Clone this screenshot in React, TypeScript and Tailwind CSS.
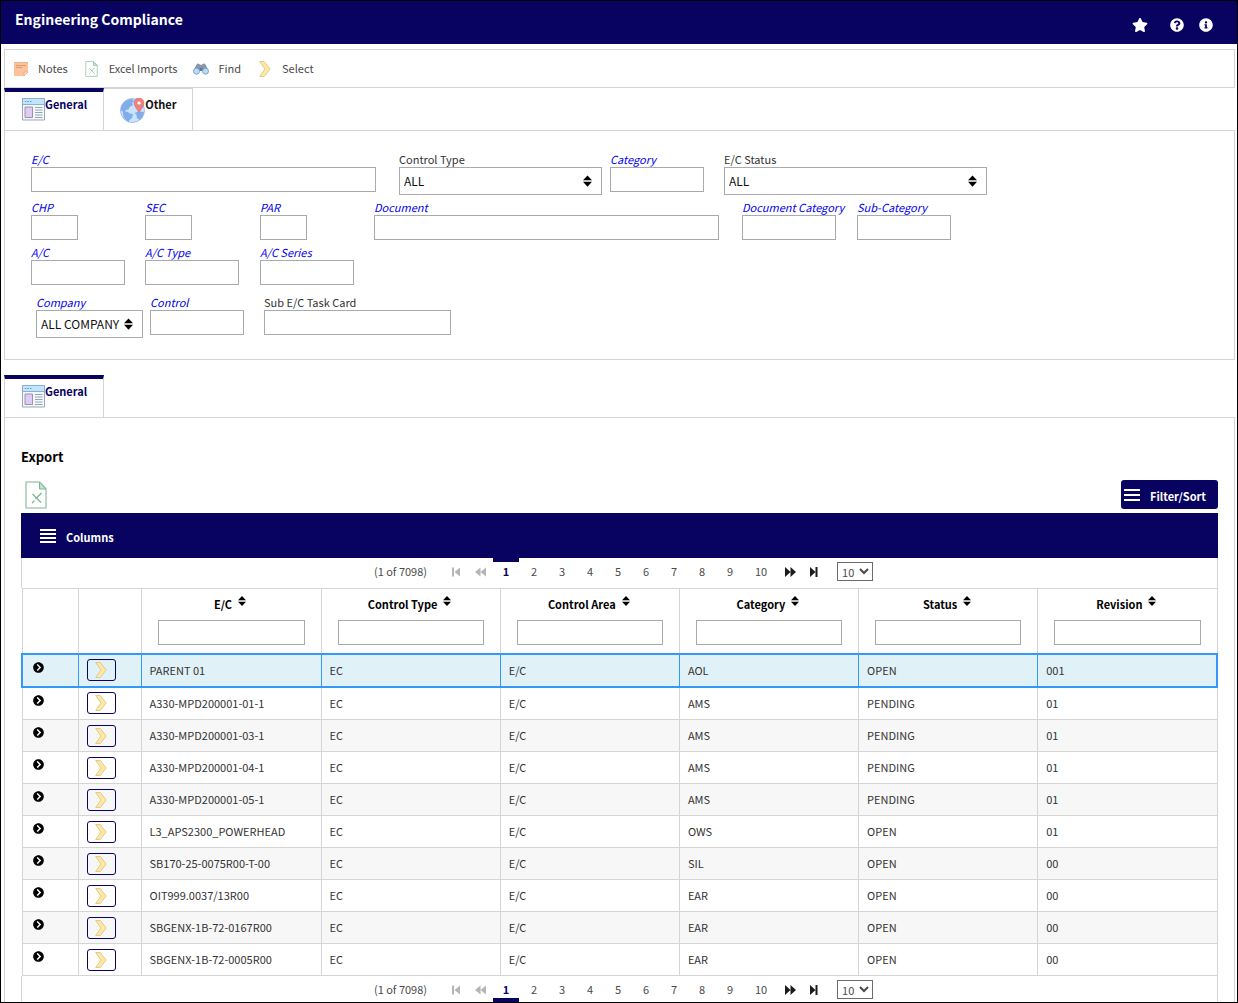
import { useId, useState } from 'react';
import { FaChevronCircleRight, FaInfoCircle, FaQuestionCircle, FaStar } from 'react-icons/fa';

interface EcRow {
  ec: string;
  controlType: string;
  controlArea: string;
  category: string;
  status: string;
  revision: string;
}

const rows: EcRow[] = [
  { ec: 'PARENT 01', controlType: 'EC', controlArea: 'E/C', category: 'AOL', status: 'OPEN', revision: '001' },
  { ec: 'A330-MPD200001-01-1', controlType: 'EC', controlArea: 'E/C', category: 'AMS', status: 'PENDING', revision: '01' },
  { ec: 'A330-MPD200001-03-1', controlType: 'EC', controlArea: 'E/C', category: 'AMS', status: 'PENDING', revision: '01' },
  { ec: 'A330-MPD200001-04-1', controlType: 'EC', controlArea: 'E/C', category: 'AMS', status: 'PENDING', revision: '01' },
  { ec: 'A330-MPD200001-05-1', controlType: 'EC', controlArea: 'E/C', category: 'AMS', status: 'PENDING', revision: '01' },
  { ec: 'L3_APS2300_POWERHEAD', controlType: 'EC', controlArea: 'E/C', category: 'OWS', status: 'OPEN', revision: '01' },
  { ec: 'SB170-25-0075R00-T-00', controlType: 'EC', controlArea: 'E/C', category: 'SIL', status: 'OPEN', revision: '00' },
  { ec: 'OIT999.0037/13R00', controlType: 'EC', controlArea: 'E/C', category: 'EAR', status: 'OPEN', revision: '00' },
  { ec: 'SBGENX-1B-72-0167R00', controlType: 'EC', controlArea: 'E/C', category: 'EAR', status: 'OPEN', revision: '00' },
  { ec: 'SBGENX-1B-72-0005R00', controlType: 'EC', controlArea: 'E/C', category: 'EAR', status: 'OPEN', revision: '00' },
];

const columns = ['E/C', 'Control Type', 'Control Area', 'Category', 'Status', 'Revision'];

const NoteIcon = () => (
  <svg width="14" height="14" viewBox="0 0 14 14">
    <path d="M0 0h14v10l-4 4H0z" fill="#fcc29a" />
    <path d="M0 .5h14" stroke="#eab48c" />
    <path d="M2 3.500h10M2 5.500h6" stroke="#dc9a6c" />
    <path d="M10 14v-4h4z" fill="#fde3d0" stroke="#e0a070" strokeWidth=".6" />
  </svg>
);

const ExcelIcon = ({ className }: { className: string }) => (
  <svg className={className} viewBox="0 0 22 28">
    <path d="M1 1h13.500l6.500 7v19H1z" fill="#fff" stroke="#a9cdb8" strokeWidth="1.600" strokeLinejoin="round" />
    <path d="M14.500 1v7h6.500z" fill="#bfe6c9" stroke="#7fb394" strokeWidth="1" strokeLinejoin="round" />
    <path d="M7.500 13l8.500 8.500M16.500 12l-6 6M9.500 19.500l-2.500 2.500" stroke="#7fb394" strokeWidth="1.300" fill="none" />
  </svg>
);

const BinocularsIcon = () => (
  <svg width="16" height="12" viewBox="0 0 16 12">
    <path d="M3.500 1.500Q4.800-.2 6.300.9l.7.800h2l.7-.800q1.500-1.100 2.800.6l2.800 5.700H.7z" fill="#8796ac" />
    <path d="M6.500 5h3v3h-3z" fill="#66758e" />
    <circle cx="3.500" cy="8.200" r="3" fill="#b5dcfa" stroke="#7c9cc4" strokeWidth=".9" />
    <circle cx="12.500" cy="8.200" r="3" fill="#b5dcfa" stroke="#7c9cc4" strokeWidth=".9" />
  </svg>
);

const ArrowIcon = () => (
  <svg width="12" height="16" viewBox="0 0 12 16">
    <path d="M.7.500h4.500l6 7.500-6 7.500H.7L6 8z" fill="#ffe9a0" stroke="#dcc588" strokeWidth=".9" strokeLinejoin="round" />
  </svg>
);

const WindowIcon = () => (
  <svg width="23" height="23" viewBox="0 0 23 23">
    <path d="M.5.500h22v21.500H.5z" fill="#f6f9fc" stroke="#93a9bd" />
    <path d="M1 1h21v5H1z" fill="#c0e5ff" />
    <path d="M.5 6.500h22M.5.500h22" stroke="#8ab0d8" />
    <path d="M3 3.500h1.500M5.500 3.500h1.500M8 3.500h1.500" stroke="#7394bd" />
    <path d="M3 9h7.500v10.500H3z" fill="#dccdf2" stroke="#a78cae" />
    <path d="M13 9.500h7.500M13 12h7.500M13 14.500h7.500M13 17h7.500M13 19.500h7.500" stroke="#94a6b4" />
  </svg>
);

const GlobeIcon = () => (
  <svg width="25" height="25" viewBox="0 0 25 25">
    <circle cx="12.500" cy="12.500" r="12" fill="#c6e4fd" stroke="#8cb2e6" strokeWidth=".8" />
    <path d="M3 5.500Q6.500 1 12 1l2 2-2 2.500 1 2-3 1-1.500 3-3 .5-.5 3-3-2-1.500-1Q1 8 3 5.500z" fill="#83ade9" />
    <path d="M3 14l4-.5 3 2 3 .5-1 4-3 2.500v2L5.500 21.500Q2.500 18.500 3 14z" fill="#83ade9" />
    <path d="M14.500 15l4-1.500 5.500.5q-.5 5-4.500 8L17 20l-.5-3zM17 6l4-1 2.500 4-4 2z" fill="#83ade9" />
    <path d="M19 0a4.900 4.900 0 0 1 4.900 5c0 3-2.900 6-4.900 9.500-2-3.500-4.900-6.500-4.900-9.500A4.900 4.900 0 0 1 19 0z" fill="#f28080" stroke="#d66565" strokeWidth=".6" />
    <circle cx="19" cy="5" r="2.100" fill="#fff" stroke="#d66565" strokeWidth=".6" />
  </svg>
);

const SortIcon = ({ className }: { className: string }) => (
  <svg className={className} viewBox="0 0 8 10" fill="#000">
    <path d="M4 0l4 4.300H0zM4 10L0 5.700h8z" />
  </svg>
);

const BarsIcon = ({ lines }: { lines: number[] }) => (
  <svg width="16" height="14" viewBox="0 0 16 14">
    {lines.map((y) => (
      <path key={y} d={`M0 ${y}h16`} stroke="#fff" strokeWidth="2" />
    ))}
  </svg>
);

const pagerPaths = {
  First: 'M1 0.500h2v9H1zM9 0.500v9L3.500 5z',
  Previous: 'M5.500 0.500v9L0 5zM11 0.500v9L5.500 5z',
  Next: 'M0 0v10L5.500 5zM5.500 0v10L11 5z',
  Last: 'M1 0v10L6.500 5zM6.500 0h2v10h-2z',
};

const PagerButton = ({ name, disabled }: { name: keyof typeof pagerPaths; disabled?: boolean }) => (
  <button
    type="button"
    aria-label={name}
    disabled={disabled}
    className="flex w-[22px] items-center justify-center pt-0.5 text-[#1c1c1c] disabled:text-[#b5b5b5]"
  >
    <svg width="11" height="10" viewBox="0 0 11 10" fill="currentColor">
      <path d={pagerPaths[name]} />
    </svg>
  </button>
);

interface PaginatorProps {
  page: number;
  onChange: (page: number) => void;
  position: 'top' | 'bottom';
}

const Paginator = ({ page, onChange, position }: PaginatorProps) => {
  const marker = position === 'top' ? 'border-t-4 pb-1' : 'border-b-4 pt-1';
  return (
    <div
      className={`flex justify-center gap-0.5 border-x border-[#d5d5d5] pl-2 text-[11px] text-[#4a4a4a] ${
        position === 'top' ? 'h-[30px] pb-1' : 'h-[26px]'
      }`}
    >
      <span className="mr-4 flex items-center">(1 of 7098)</span>
      <PagerButton name="First" disabled />
      <PagerButton name="Previous" disabled />
      {[1, 2, 3, 4, 5, 6, 7, 8, 9, 10].map((n) => (
        <button
          key={n}
          type="button"
          onClick={() => onChange(n)}
          className={`${n === 10 ? 'w-8' : 'w-[26px]'} ${
            n === page ? `${marker} border-[#080361] font-bold text-[#080361]` : ''
          }`}
        >
          {n}
        </button>
      ))}
      <PagerButton name="Next" />
      <PagerButton name="Last" />
      <select
        aria-label="Rows per page"
        defaultValue="10"
        className="ml-2.5 h-[19px] w-9 self-center border border-[#6b6b6b] bg-white pb-0.5 text-[11px]"
      >
        <option>10</option>
        <option>25</option>
        <option>50</option>
      </select>
    </div>
  );
};

interface FieldProps {
  label: string;
  width: string;
  plain?: boolean;
  options?: string[];
}

const Field = ({ label, width, plain, options }: FieldProps) => {
  const id = useId();
  return (
    <div className={width}>
      <label
        htmlFor={id}
        className={`block text-[11px] leading-4 whitespace-nowrap ${plain ? 'text-[#333]' : 'text-[#0000f0] italic'}`}
      >
        {label}
      </label>
      {options ? (
        <div className="relative">
          <select
            id={id}
            className="block h-7 w-full appearance-none border border-[#a9a9b0] bg-white pl-1 text-[12px] text-[#111]"
          >
            {options.map((o) => (
              <option key={o}>{o}</option>
            ))}
          </select>
          <SortIcon className="pointer-events-none absolute top-2 right-2.5 h-3 w-[9px]" />
        </div>
      ) : (
        <input id={id} type="text" className="block h-[25px] w-full border border-[#a9a9b0] bg-white px-1 text-[12px]" />
      )}
    </div>
  );
};

interface TabProps {
  label: string;
  icon: React.ReactNode;
  active?: boolean;
}

const Tab = ({ label, icon, active }: TabProps) => (
  <button
    type="button"
    role="tab"
    aria-selected={!!active}
    className={`flex h-[42px] items-start border-r border-[#d5d5d5] pr-4 text-[11px] leading-4 font-bold ${
      active ? 'border-l border-t-4 border-t-[#080361] pt-1 pl-[17px] text-[#080361]' : 'border-t pt-[7px] pl-4 text-[#111]'
    }`}
  >
    <span className="pt-0.5">{icon}</span>
    {label}
  </button>
);

const tools = [
  { label: 'Notes', icon: <NoteIcon /> },
  { label: 'Excel Imports', icon: <ExcelIcon className="h-4 w-[13px]" /> },
  { label: 'Find', icon: <BinocularsIcon /> },
  { label: 'Select', icon: <ArrowIcon /> },
];

const App = () => {
  const [page, setPage] = useState(1);
  const [selected, setSelected] = useState(0);

  return (
    <div className="border border-black bg-white font-['Noto_Sans_CJK_SC','Source_Sans_Pro',sans-serif] text-[#333]">
      <header className="flex h-[43px] justify-between bg-[#080361] pr-6 pl-3.5 text-white">
        <h1 className="pt-2 text-[14px] leading-5 font-bold">Engineering Compliance</h1>
        <div className="flex items-center pt-1">
          <button type="button" aria-label="Favourite" className="mr-[22px]">
            <FaStar size={16} />
          </button>
          <button type="button" aria-label="Help" className="mr-[15px]">
            <FaQuestionCircle size={14} />
          </button>
          <button type="button" aria-label="Information">
            <FaInfoCircle size={14} />
          </button>
        </div>
      </header>

      <main className="pt-[5px] pr-0.5 pl-[3px]">
        <div className="flex h-[39px] items-center gap-4 border border-[#d5d5d5] pl-2 text-[11px] leading-4 text-[#4a4a4a]">
          {tools.map((t) => (
            <button key={t.label} type="button" className="flex items-center gap-[9px]">
              <span className="flex w-4 justify-center">{t.icon}</span>
              <span className="pb-0.5">{t.label}</span>
            </button>
          ))}
        </div>

        <div role="tablist" className="flex">
          <Tab label="General" icon={<WindowIcon />} active />
          <Tab label="Other" icon={<GlobeIcon />} />
        </div>

        <section className="border border-[#d5d5d5] px-[26px] pt-5 pb-[21px]">
          <div className="flex h-12">
            <Field label="E/C" width="mr-[23px] w-[345px]" />
            <Field label="Control Type" width="mr-2 w-[203px]" plain options={['ALL']} />
            <Field label="Category" width="mr-5 w-[94px]" />
            <Field label="E/C Status" width="w-[263px]" plain options={['ALL']} />
          </div>
          <div className="grid grid-cols-[114px_115px_114px_368px_115px_94px] gap-y-1">
            <Field label="CHP" width="w-[47px]" />
            <Field label="SEC" width="w-[47px]" />
            <Field label="PAR" width="w-[47px]" />
            <Field label="Document" width="w-[345px]" />
            <Field label="Document Category" width="w-[94px]" />
            <Field label="Sub-Category" width="w-[94px]" />
            <Field label="A/C" width="w-[94px]" />
            <Field label="A/C Type" width="w-[94px]" />
            <Field label="A/C Series" width="w-[94px]" />
          </div>
          <div className="mt-[9px] grid grid-cols-[114px_114px_187px] pl-[5px]">
            <Field label="Company" width="w-[107px]" options={['ALL COMPANY']} />
            <Field label="Control" width="w-[94px]" />
            <Field label="Sub E/C Task Card" width="w-[187px]" plain />
          </div>
        </section>

        <div role="tablist" className="mt-[15px] flex">
          <Tab label="General" icon={<WindowIcon />} active />
        </div>

        <section className="border border-b-0 border-[#d5d5d5] px-4 pt-[29px]">
          <h2 className="text-[13px] leading-5 font-bold text-black">Export</h2>
          <div className="mt-[13px] flex h-[33px] items-start justify-between">
            <button type="button" aria-label="Export to Excel" className="mt-px ml-1">
              <ExcelIcon className="h-7 w-[22px]" />
            </button>
            <button
              type="button"
              className="flex h-[29px] items-center gap-2.5 rounded-[3px] bg-[#080361] pr-3 pl-[3px] text-[11px] font-bold text-white"
            >
              <BarsIcon lines={[2, 7, 12]} />
              <span className="pt-1">Filter/Sort</span>
            </button>
          </div>

          <button
            type="button"
            className="flex h-[45px] w-full items-center gap-2.5 bg-[#080361] pl-[19px] text-[11px] font-bold text-white"
          >
            <BarsIcon lines={[1, 5, 9, 13]} />
            <span className="pt-1">Columns</span>
          </button>

          <Paginator page={page} onChange={setPage} position="top" />

          <table className="w-full table-fixed border-collapse text-[11px]">
            <colgroup>
              <col className="w-14" />
              <col className="w-[63px]" />
              <col className="w-[180px]" />
            </colgroup>
            <thead>
              <tr className="h-[65px] align-top">
                <td className="border border-[#d5d5d5]" />
                <td className="border border-[#d5d5d5]" />
                {columns.map((c) => (
                  <th key={c} scope="col" className="border border-[#d5d5d5] px-4 pt-[7px] font-bold text-black">
                    <button type="button" className="inline-flex items-start gap-1.5 pr-0.5 leading-4">
                      {c}
                      <SortIcon className="h-2.5 w-2" />
                    </button>
                    <input
                      type="text"
                      aria-label={`Filter by ${c}`}
                      className="mt-[7px] block h-[25px] w-full border border-[#a9a9b0] bg-white px-1 font-normal"
                    />
                  </th>
                ))}
              </tr>
            </thead>
            <tbody>
              {rows.map((row, i) => {
                const active = i === selected;
                const cell = active ? 'border border-[#3399f8]' : 'border border-[#d5d5d5]';
                return (
                  <tr
                    key={row.ec}
                    onClick={() => setSelected(i)}
                    className={
                      active
                        ? 'h-[33px] border-2 border-[#3399f8] bg-[#e0f1f8] [&+tr]:h-[33px]'
                        : `h-8 ${i % 2 === 0 ? 'bg-[#f7f7f7]' : ''}`
                    }
                  >
                    <td className={`${cell} pb-1.5 pl-2.5`}>
                      <button type="button" aria-label={`Expand ${row.ec}`} className="block text-black">
                        <FaChevronCircleRight size={11} />
                      </button>
                    </td>
                    <td className={`${cell} pl-2`}>
                      <button
                        type="button"
                        aria-label={`Select ${row.ec}`}
                        className="flex h-[22px] w-[29px] items-center justify-center rounded-[3px] border border-[#080361]"
                      >
                        <ArrowIcon />
                      </button>
                    </td>
                    {[row.ec, row.controlType, row.controlArea, row.category, row.status, row.revision].map((v, k) => (
                      <td key={k} className={`${cell} pl-2`}>
                        {v}
                      </td>
                    ))}
                  </tr>
                );
              })}
            </tbody>
          </table>

          <Paginator page={page} onChange={setPage} position="bottom" />
        </section>
      </main>
    </div>
  );
};

export default App;
